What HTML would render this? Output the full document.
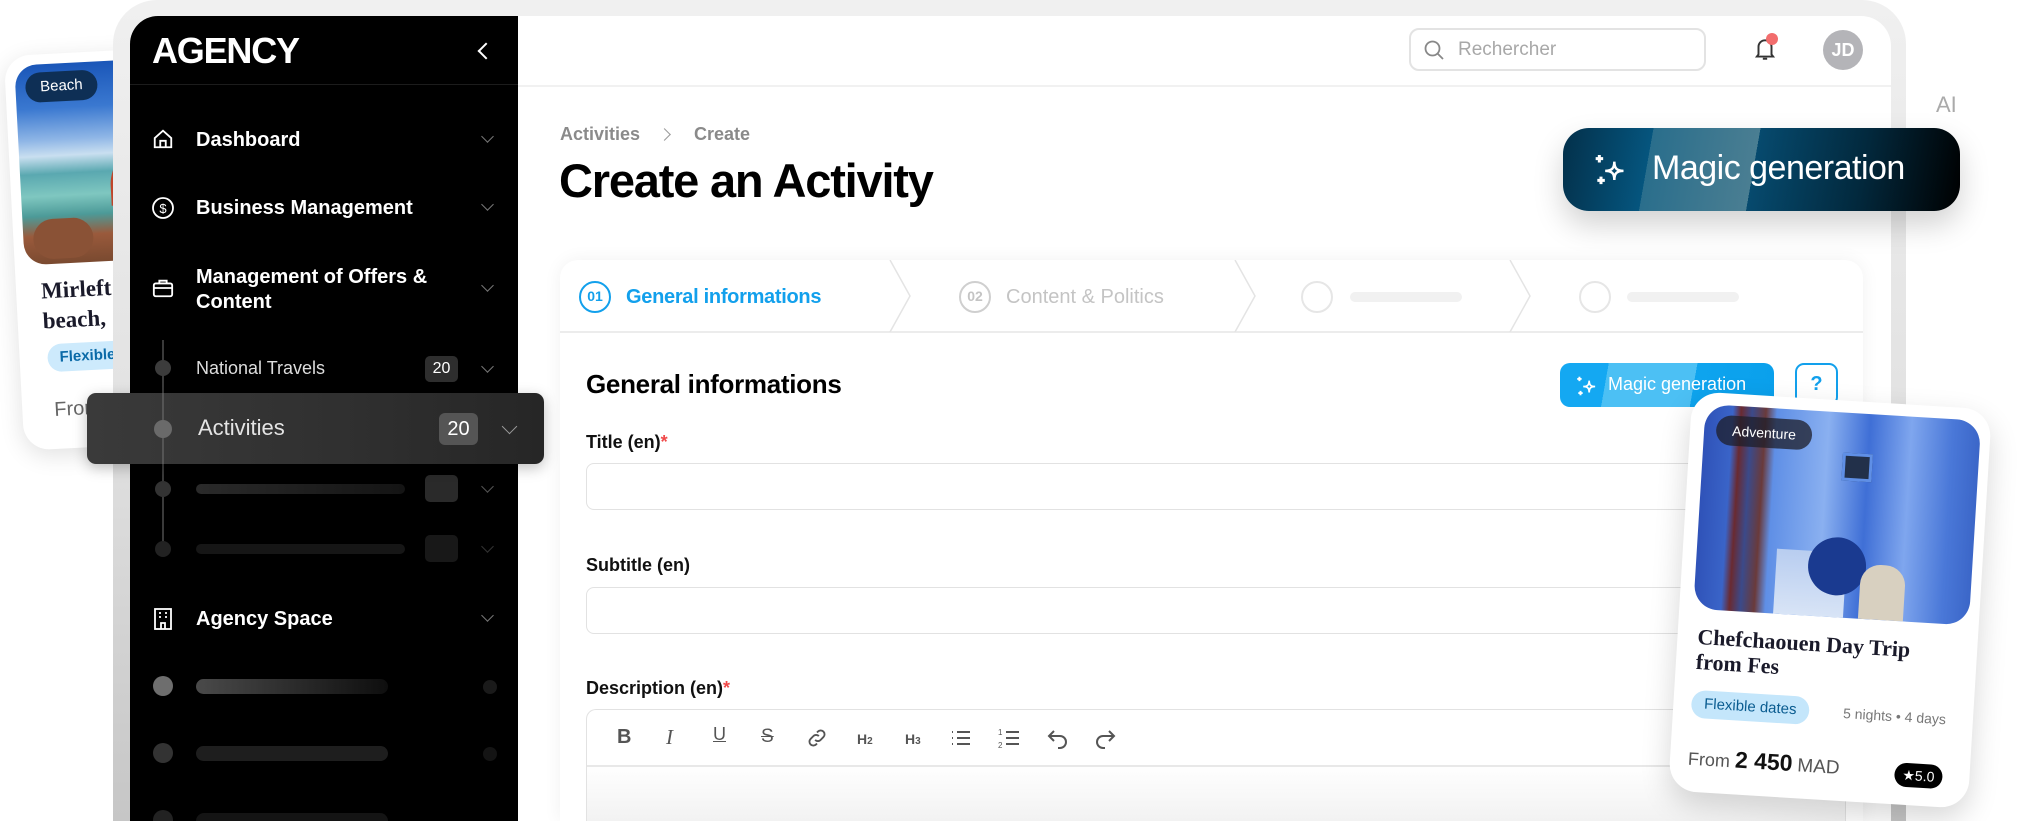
<!DOCTYPE html>
<html style="width:2022px;height:821px;overflow:hidden"><head><meta charset="utf-8">
<style>
*{box-sizing:border-box;margin:0;padding:0}
body{width:2022px;height:821px;overflow:hidden;background:#fff;font-family:"Liberation Sans",sans-serif;position:relative}
#w{position:absolute;left:0;top:0;width:2022px;height:821px;overflow:hidden}
.a{position:absolute}
.chev{position:absolute;width:9px;height:9px;border-right:1.6px solid #777;border-bottom:1.6px solid #777;transform:rotate(45deg)}
.sk{position:absolute;border-radius:8px}
.lbl{position:absolute;left:586px;font-size:18px;font-weight:bold;color:#111}
.lbl b{color:#f04848;font-weight:bold}
.inp{position:absolute;left:586px;width:1260px;height:47px;border:1.5px solid #e2e2e2;border-radius:8px;background:#fff}
.tb{position:absolute;top:726px;font-size:17px;color:#555;font-weight:bold}
</style></head><body><div id="w">

<!-- beach card (behind frame) -->
<div class="a" style="left:14px;top:52px;width:150px;height:395px;background:#fff;border-radius:26px;box-shadow:0 6px 24px rgba(0,0,0,.12);transform:rotate(-3deg);overflow:hidden">
  <div class="a" style="left:10px;top:10px;width:140px;height:200px;border-radius:22px;overflow:hidden;background:linear-gradient(180deg,#1a56b8 0%,#3a78d0 22%,#8fb6e6 38%,#c9dff0 46%,#5aa8b0 55%,#7fc7c0 66%,#4c9a98 76%,#9a5a3c 86%,#7a4a30 100%)">
    <div class="a" style="left:90px;top:85px;width:70px;height:60px;background:#c0452a;border-radius:40px 0 0 0"></div>
    <div class="a" style="left:10px;top:155px;width:60px;height:40px;background:#8a5236;border-radius:30px"></div>
  </div>
  <div class="a" style="left:20px;top:18px;width:72px;height:30px;border-radius:15px;background:#0e2f55;color:#fff;font-size:15px;line-height:30px;text-align:center">Beach</div>
  <div class="a" style="left:25px;top:222px;font-family:'Liberation Serif',serif;font-weight:bold;font-size:23px;line-height:30px;color:#1a1a2a">Mirleft<br>beach,</div>
  <div class="a" style="left:28px;top:290px;width:110px;height:28px;border-radius:14px;background:#cdeafc;color:#0a6aa8;font-size:15px;font-weight:bold;line-height:28px;padding-left:12px">Flexible</div>
  <div class="a" style="left:32px;top:345px;font-size:20px;color:#666">From</div>
</div>

<!-- device frame -->
<div class="a" style="left:113px;top:0;width:1793px;height:821px;border-radius:44px 44px 0 0;background:linear-gradient(180deg,#f0f0f0 0%,#e2e2e2 50%,#c6c6c6 100%)"></div>
<div class="a" style="left:130px;top:16px;width:1761px;height:805px;border-radius:30px 30px 0 0;background:#fff"></div>

<!-- header -->
<div class="a" style="left:518px;top:85px;width:1373px;height:2px;background:#f1f1f1"></div>
<div class="a" style="left:1409px;top:28px;width:297px;height:43px;border:2px solid #e3e3e3;border-radius:10px"></div>
<svg class="a" style="left:1422px;top:38px" width="24" height="24" viewBox="0 0 24 24" fill="none" stroke="#888" stroke-width="1.8"><circle cx="10.5" cy="10.5" r="7"/><path d="M15.5 15.5L21 21"/></svg>
<div class="a" style="left:1458px;top:39px;font-size:19px;color:#a8a8a8">Rechercher</div>
<svg class="a" style="left:1752px;top:36px" width="26" height="26" viewBox="0 0 24 24" fill="none" stroke="#333" stroke-width="1.8"><path d="M6 17V10a6 6 0 0 1 12 0v7l1.5 2h-15z"/><path d="M10 21h4"/></svg>
<div class="a" style="left:1766px;top:33px;width:12px;height:12px;border-radius:50%;background:#f26d6d"></div>
<div class="a" style="left:1823px;top:30px;width:40px;height:40px;border-radius:50%;background:#b4b4b8;color:#fff;font-weight:bold;font-size:18px;line-height:40px;text-align:center">JD</div>
<div class="a" style="left:1936px;top:92px;font-size:22px;color:#aaa">AI</div>

<!-- breadcrumb + title -->
<div class="a" style="left:560px;top:124px;font-size:18px;font-weight:bold;color:#8a8a8a">Activities</div>
<div class="chev" style="left:660px;top:130px;transform:rotate(-45deg);border-color:#999"></div>
<div class="a" style="left:694px;top:124px;font-size:18px;font-weight:bold;color:#8a8a8a">Create</div>
<div class="a" style="left:559px;top:153px;font-size:47px;font-weight:bold;letter-spacing:-1.2px;color:#000">Create an Activity</div>

<!-- form card -->
<div class="a" style="left:560px;top:260px;width:1303px;height:561px;border-radius:18px 18px 0 0;background:#fff;box-shadow:0 0 18px rgba(0,0,0,.06)"></div>
<div class="a" style="left:560px;top:331px;width:1303px;height:1.5px;background:#ececec"></div>
<svg class="a" style="left:560px;top:260px" width="1303" height="72" fill="none" stroke="#e4e4e4" stroke-width="1.5"><path d="M330 0L350 36L330 72M675 0L695 36L675 72M950 0L970 36L950 72"/></svg>
<div class="a" style="left:579px;top:281px;width:32px;height:32px;border-radius:50%;border:2.5px solid #12a0ec;color:#12a0ec;font-size:14px;font-weight:bold;line-height:27px;text-align:center">01</div>
<div class="a" style="left:626px;top:286px;font-size:20px;font-weight:bold;color:#12a0ec;letter-spacing:-0.3px">General informations</div>
<div class="a" style="left:959px;top:281px;width:32px;height:32px;border-radius:50%;border:2.5px solid #cfcfcf;color:#c4c4c4;font-size:14px;font-weight:bold;line-height:27px;text-align:center">02</div>
<div class="a" style="left:1006px;top:286px;font-size:20px;color:#c4c4c4">Content &amp; Politics</div>
<div class="a" style="left:1301px;top:281px;width:32px;height:32px;border-radius:50%;border:2px solid #e6e6e6"></div>
<div class="sk" style="left:1350px;top:292px;width:112px;height:10px;background:#f1f1f1"></div>
<div class="a" style="left:1579px;top:281px;width:32px;height:32px;border-radius:50%;border:2px solid #e6e6e6"></div>
<div class="sk" style="left:1627px;top:292px;width:112px;height:10px;background:#f1f1f1"></div>

<div class="a" style="left:586px;top:369px;font-size:26px;font-weight:bold;color:#000;letter-spacing:-0.3px">General informations</div>
<div class="a" style="left:1560px;top:363px;width:214px;height:44px;border-radius:10px;background:linear-gradient(100deg,#14a8f2 0%,#14a8f2 22%,#4cc0f4 22%,#4cc0f4 62%,#0ea4ee 62%,#0aa0ec 100%);overflow:hidden">
  <svg class="a" style="left:14px;top:10px" width="26" height="26" viewBox="0 0 24 24" fill="none" stroke="#fff" stroke-width="1.6"><path d="M14 7C14 11 15.5 12.5 19.5 12.5C15.5 12.5 14 14 14 18C14 14 12.5 12.5 8.5 12.5C12.5 12.5 14 11 14 7Z"/><path d="M5 3.5v4M3 5.5h4M6 16.5v4M4 18.5h4" stroke-width="1.8"/></svg>
  <div class="a" style="left:48px;top:11px;font-size:18px;color:#fff">Magic generation</div>
</div>
<div class="a" style="left:1795px;top:363px;width:43px;height:43px;border-radius:9px;border:2px solid #12a0ec;color:#12a0ec;font-weight:bold;font-size:20px;line-height:39px;text-align:center">?</div>

<div class="lbl" style="top:432px">Title (en)<b>*</b></div>
<div class="inp" style="top:463px"></div>
<div class="lbl" style="top:555px">Subtitle (en)</div>
<div class="inp" style="top:587px"></div>
<div class="lbl" style="top:678px">Description (en)<b>*</b></div>
<div class="a" style="left:586px;top:709px;width:1260px;height:112px;border:1.5px solid #e2e2e2;border-bottom:none;border-radius:10px 10px 0 0;background:linear-gradient(180deg,#fff 0%,#fff 50%,#f2f2f2 100%)"></div>
<div class="a" style="left:587px;top:765px;width:1258px;height:1.5px;background:#e8e8e8"></div>
<div class="tb" style="left:617px;font-size:20px;top:726px">B</div>
<div class="tb" style="left:666px;font-family:'Liberation Serif',serif;font-style:italic;font-weight:normal;font-size:21px;top:725px">I</div>
<div class="tb" style="left:713px;font-weight:normal;font-size:18px;text-decoration:underline;top:724px">U</div>
<div class="tb" style="left:761px;font-weight:normal;font-size:19px;text-decoration:line-through;top:726px">S</div>
<svg class="a" style="left:806px;top:727px" width="22" height="22" viewBox="0 0 24 24" fill="none" stroke="#555" stroke-width="2"><path d="M10 14a4 4 0 0 0 6 0l3-3a4 4 0 0 0-6-6l-1 1"/><path d="M14 10a4 4 0 0 0-6 0l-3 3a4 4 0 0 0 6 6l1-1"/></svg>
<div class="tb" style="left:857px;font-size:14px;top:731px">H<span style="font-size:10px">2</span></div>
<div class="tb" style="left:905px;font-size:14px;top:731px">H<span style="font-size:10px">3</span></div>
<svg class="a" style="left:950px;top:728px" width="22" height="20" viewBox="0 0 22 20" fill="none" stroke="#555" stroke-width="2"><path d="M7 4h13M7 10h13M7 16h13M2 4h1M2 10h1M2 16h1"/></svg>
<svg class="a" style="left:998px;top:726px" width="22" height="24" viewBox="0 0 22 24" fill="none" stroke="#555" stroke-width="2"><path d="M8 6h13M8 12h13M8 18h13"/><text x="0" y="9" font-size="8" fill="#555" stroke="none" font-family="Liberation Sans">1</text><text x="0" y="22" font-size="8" fill="#555" stroke="none" font-family="Liberation Sans">2</text></svg>
<svg class="a" style="left:1046px;top:726px" width="24" height="24" viewBox="0 0 24 24" fill="none" stroke="#555" stroke-width="2"><path d="M8 5L3 10l5 5"/><path d="M3 10h11a6 6 0 0 1 0 12h-2"/></svg>
<svg class="a" style="left:1093px;top:726px" width="24" height="24" viewBox="0 0 24 24" fill="none" stroke="#555" stroke-width="2"><path d="M16 5l5 5-5 5"/><path d="M21 10H10a6 6 0 0 0 0 12h2"/></svg>

<!-- big magic button -->
<div class="a" style="left:1563px;top:128px;width:397px;height:83px;border-radius:26px;overflow:hidden;box-shadow:0 14px 30px rgba(0,0,0,.18);background:linear-gradient(100deg,#03304a 0%,#05557e 22%,#2a6e8c 22%,#4a7e92 48%,#064a6e 48%,#02283c 75%,#000 100%)">
  <svg class="a" style="left:28px;top:22px" width="40" height="40" viewBox="0 0 24 24" fill="none" stroke="#fff" stroke-width="1.5"><path d="M14 7C14 11 15.5 12.5 19.5 12.5C15.5 12.5 14 14 14 18C14 14 12.5 12.5 8.5 12.5C12.5 12.5 14 11 14 7Z"/><path d="M5 3v4.5M2.8 5.2h4.5M6 16v4.5M3.8 18.2h4.5" stroke-width="1.8"/></svg>
  <div class="a" style="left:89px;top:21px;font-size:34px;color:#fff;letter-spacing:-0.5px">Magic generation</div>
</div>

<!-- sidebar -->
<div class="a" style="left:130px;top:16px;width:388px;height:805px;background:#000;border-radius:28px 0 0 0"></div>
<div class="a" style="left:130px;top:84px;width:388px;height:1px;background:#1c1c1c"></div>
<div class="a" style="left:152px;top:30px;font-size:36px;font-weight:bold;color:#fff;letter-spacing:-1.2px">AGENCY</div>
<div class="chev" style="left:480px;top:45px;width:12px;height:12px;border-color:#fff;border-width:0 0 2.4px 2.4px;border-style:solid;transform:rotate(45deg)"></div>

<svg class="a" style="left:152px;top:128px" width="22" height="22" viewBox="0 0 24 24" fill="none" stroke="#fff" stroke-width="2"><path d="M3 11L12 3l9 8v10H3z"/><path d="M9 21v-7h6v7"/></svg>
<div class="a" style="left:196px;top:129px;font-size:20px;font-weight:bold;color:#fff">Dashboard</div>
<div class="chev" style="left:483px;top:132px"></div>

<svg class="a" style="left:151px;top:196px" width="24" height="24" viewBox="0 0 24 24" fill="none" stroke="#fff" stroke-width="1.8"><circle cx="12" cy="12" r="10"/><text x="12" y="17" font-size="13" fill="#fff" stroke="none" text-anchor="middle" font-family="Liberation Sans">$</text></svg>
<div class="a" style="left:196px;top:197px;font-size:20px;font-weight:bold;color:#fff">Business Management</div>
<div class="chev" style="left:483px;top:200px"></div>

<svg class="a" style="left:152px;top:277px" width="22" height="22" viewBox="0 0 24 24" fill="none" stroke="#fff" stroke-width="2"><rect x="2" y="7" width="20" height="14" rx="2"/><path d="M8 7V4h8v3M2 12h20"/></svg>
<div class="a" style="left:196px;top:265px;font-size:20px;font-weight:bold;color:#fff;line-height:25px">Management of Offers &amp;<br>Content</div>
<div class="chev" style="left:483px;top:281px"></div>

<div class="a" style="left:162px;top:340px;width:2px;height:210px;background:#3a3a3a"></div>
<div class="a" style="left:155px;top:360px;width:16px;height:16px;border-radius:50%;background:#3c3c3c"></div>
<div class="a" style="left:196px;top:358px;font-size:18px;color:#ddd">National Travels</div>
<div class="a" style="left:425px;top:356px;width:33px;height:26px;border-radius:5px;background:#2e2e2e;color:#fff;font-size:16px;line-height:26px;text-align:center">20</div>
<div class="chev" style="left:483px;top:362px"></div>

<div class="a" style="left:155px;top:481px;width:16px;height:16px;border-radius:50%;background:#333"></div>
<div class="sk" style="left:196px;top:484px;width:209px;height:10px;background:linear-gradient(90deg,#2a2a2a,#141414)"></div>
<div class="a" style="left:425px;top:475px;width:33px;height:27px;border-radius:5px;background:#2a2a2a"></div>
<div class="chev" style="left:483px;top:482px;border-color:#555"></div>
<div class="a" style="left:155px;top:541px;width:16px;height:16px;border-radius:50%;background:#222"></div>
<div class="sk" style="left:196px;top:544px;width:209px;height:10px;background:#161616"></div>
<div class="a" style="left:425px;top:535px;width:33px;height:27px;border-radius:5px;background:#181818"></div>
<div class="chev" style="left:483px;top:542px;border-color:#333"></div>

<svg class="a" style="left:153px;top:608px" width="20" height="22" viewBox="0 0 20 22" fill="none" stroke="#fff" stroke-width="1.8"><rect x="2" y="1" width="16" height="20"/><path d="M6 5h2M12 5h2M6 9h2M12 9h2M8 21v-6h4v6"/></svg>
<div class="a" style="left:196px;top:608px;font-size:20px;font-weight:bold;color:#fff">Agency Space</div>
<div class="chev" style="left:483px;top:611px"></div>

<div class="a" style="left:153px;top:676px;width:20px;height:20px;border-radius:50%;background:#6e6e6e"></div>
<div class="sk" style="left:196px;top:679px;width:192px;height:15px;background:linear-gradient(90deg,#4a4a4a,#0e0e0e)"></div>
<div class="a" style="left:483px;top:680px;width:14px;height:14px;border-radius:50%;background:#1a1a1a"></div>
<div class="a" style="left:153px;top:743px;width:20px;height:20px;border-radius:50%;background:#333"></div>
<div class="sk" style="left:196px;top:746px;width:192px;height:15px;background:#1e1e1e"></div>
<div class="a" style="left:483px;top:747px;width:14px;height:14px;border-radius:50%;background:#141414"></div>
<div class="a" style="left:153px;top:810px;width:20px;height:11px;border-radius:10px 10px 0 0;background:#222"></div>
<div class="a" style="left:196px;top:813px;width:192px;height:8px;border-radius:8px 8px 0 0;background:#141414"></div>

<!-- activities highlight -->
<div class="a" style="left:87px;top:393px;width:457px;height:71px;border-radius:9px;background:linear-gradient(90deg,#3a3a3a,#2f2f2f 60%,#262626);box-shadow:0 4px 14px rgba(0,0,0,.25)"></div>
<div class="a" style="left:162px;top:393px;width:2px;height:71px;background:#555"></div>
<div class="a" style="left:154px;top:420px;width:18px;height:18px;border-radius:50%;background:#6a6a6a"></div>
<div class="a" style="left:198px;top:415px;font-size:22px;color:#e4e4e4">Activities</div>
<div class="a" style="left:439px;top:413px;width:39px;height:32px;border-radius:6px;background:#555;color:#fff;font-size:20px;line-height:32px;text-align:center">20</div>
<div class="chev" style="left:504px;top:421px;width:11px;height:11px;border-color:#999"></div>

<!-- Chefchaouen card -->
<div class="a" style="left:1680px;top:400px;width:300px;height:400px;background:#fff;border-radius:28px;box-shadow:0 12px 30px rgba(0,0,0,.16);transform:rotate(3.5deg)">
  <div class="a" style="left:14px;top:12px;width:276px;height:205px;border-radius:24px;overflow:hidden;background:linear-gradient(90deg,#2f52b8 0%,#3a64c8 10%,#6a2a30 13%,#3b4a8a 17%,#6a3a3a 22%,#5f8fe6 26%,#8ab0f0 45%,#3f6fd6 60%,#7fa6ee 75%,#4a78d8 90%,#3b66c8 100%)">
    <div class="a" style="left:80px;top:140px;width:70px;height:65px;background:linear-gradient(180deg,#b8cdf0,#d8e4f6);"></div>
    <div class="a" style="left:112px;top:125px;width:58px;height:58px;border-radius:50%;background:#1a3a90"></div>
    <div class="a" style="left:165px;top:150px;width:45px;height:55px;border-radius:20px 20px 0 0;background:#d8d0c0"></div>
    <div class="a" style="left:140px;top:40px;width:30px;height:28px;background:#22304a;border:3px solid #5f8fe6"></div>
  </div>
  <div class="a" style="left:26px;top:22px;width:96px;height:30px;border-radius:15px;background:rgba(30,30,40,.75);color:#fff;font-size:14px;line-height:30px;text-align:center">Adventure</div>
  <div class="a" style="left:20px;top:232px;font-family:'Liberation Serif',serif;font-weight:bold;font-size:22px;line-height:25px;color:#1a1a2a">Chefchaouen Day Trip<br>from Fes</div>
  <div class="a" style="left:18px;top:298px;width:118px;height:28px;border-radius:14px;background:#c4e6fb;color:#0a5c90;font-size:15px;line-height:28px;text-align:center">Flexible dates</div>
  <div class="a" style="left:170px;top:304px;font-size:14px;color:#777">5 nights • 4 days</div>
  <div class="a" style="left:18px;top:352px;font-size:18px;color:#555">From <span style="font-size:23px;font-weight:bold;color:#111">2 450</span> <span style="font-size:19px">MAD</span></div>
  <div class="a" style="left:225px;top:358px;width:48px;height:24px;border-radius:12px;background:#000;color:#fff;font-size:14px;line-height:24px;text-align:center">★5.0</div>
</div>

</div></body></html>
